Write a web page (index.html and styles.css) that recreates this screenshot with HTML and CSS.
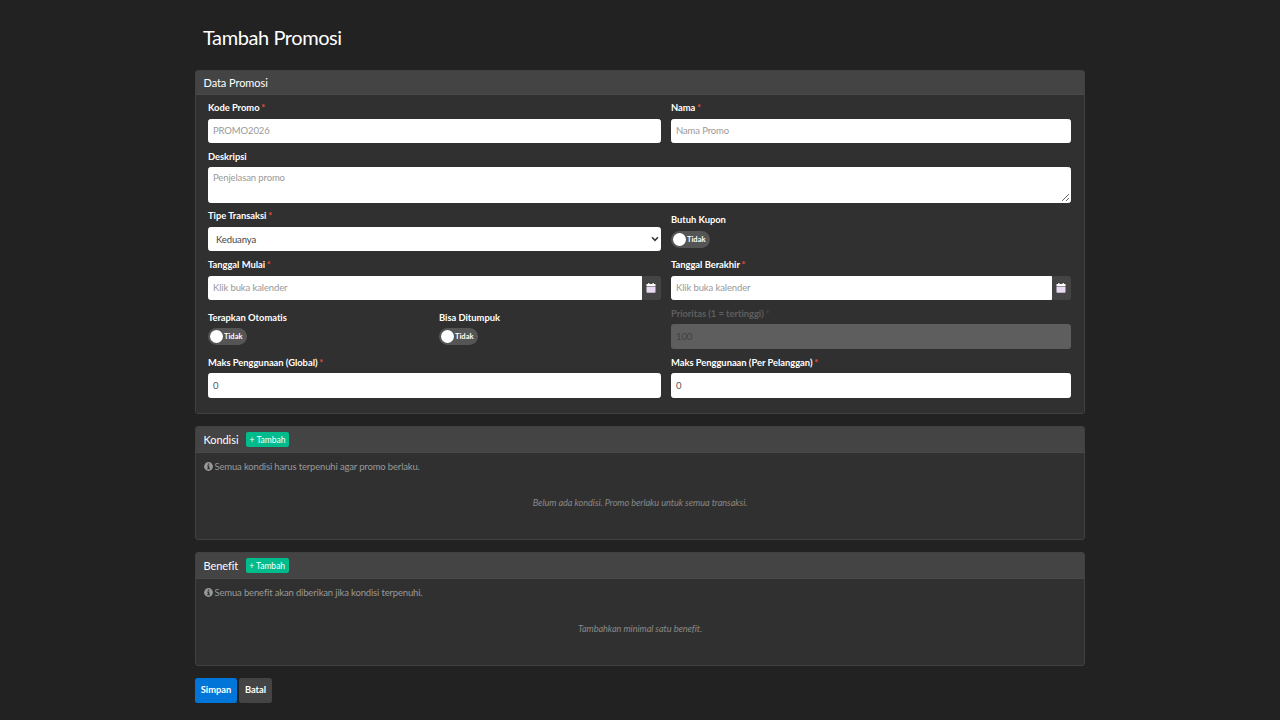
FILE: index.html
```html
<!DOCTYPE html>
<html lang="id">
<head>
<meta charset="utf-8">
<title>Tambah Promosi</title>
<link rel="stylesheet" href="styles.css">
</head>
<body>
<main class="page">
  <h1 class="page-title">Tambah Promosi</h1>

  <section class="card">
    <header class="card-header card-header-slim">Data Promosi</header>
    <div class="form-grid">
      <div class="field left">
        <label class="label">Kode Promo <span class="req">*</span></label>
        <input class="control" placeholder="PROMO2026">
      </div>
      <div class="field">
        <label class="label">Nama <span class="req">*</span></label>
        <input class="control" placeholder="Nama Promo">
      </div>
      <div class="field full">
        <label class="label">Deskripsi</label>
        <textarea class="control area" placeholder="Penjelasan promo"></textarea>
      </div>
      <div class="field left">
        <label class="label">Tipe Transaksi <span class="req">*</span></label>
        <div class="control select"><span>Keduanya</span>
          <svg class="chevron" viewBox="0 0 8 6"><path d="M1 1.2 4 4.3 7 1.2" fill="none" stroke="#333" stroke-width="1.5"/></svg>
        </div>
      </div>
      <div class="field toggle-field">
        <label class="label">Butuh Kupon</label>
        <div class="toggle"><i class="knob"></i>Tidak</div>
      </div>
      <div class="field left">
        <label class="label">Tanggal Mulai <span class="req">*</span></label>
        <div class="group">
          <input class="control" placeholder="Klik buka kalender">
          <span class="addon"><svg class="calendar" viewBox="0 0 10 10"><path fill="#fff" d="M.5 1h1.7V0h1.2v1h3.2V0h1.2v1h1.7v2h-9z"/><path fill="#ead9f2" d="M.5 3.6h9V9q0 .8-.8.8H1.3q-.8 0-.8-.8z"/></svg></span>
        </div>
      </div>
      <div class="field">
        <label class="label">Tanggal Berakhir <span class="req">*</span></label>
        <div class="group">
          <input class="control" placeholder="Klik buka kalender">
          <span class="addon"><svg class="calendar" viewBox="0 0 10 10"><path fill="#fff" d="M.5 1h1.7V0h1.2v1h3.2V0h1.2v1h1.7v2h-9z"/><path fill="#ead9f2" d="M.5 3.6h9V9q0 .8-.8.8H1.3q-.8 0-.8-.8z"/></svg></span>
        </div>
      </div>
      <div class="field toggle-field">
        <label class="label">Terapkan Otomatis</label>
        <div class="toggle"><i class="knob"></i>Tidak</div>
      </div>
      <div class="field toggle-field">
        <label class="label">Bisa Ditumpuk</label>
        <div class="toggle"><i class="knob"></i>Tidak</div>
      </div>
      <div class="field disabled">
        <label class="label">Prioritas (1 = tertinggi) <span class="req">*</span></label>
        <input class="control" value="100" disabled>
      </div>
      <div class="field left">
        <label class="label">Maks Penggunaan (Global) <span class="req">*</span></label>
        <input class="control" value="0">
      </div>
      <div class="field">
        <label class="label">Maks Penggunaan (Per Pelanggan) <span class="req">*</span></label>
        <input class="control" value="0">
      </div>
    </div>
  </section>

  <section class="card list-card">
    <header class="card-header">Kondisi <button class="btn-add">+ Tambah</button></header>
    <p class="hint"><svg class="info" viewBox="0 0 10 10"><circle cx="5" cy="5" r="4.9" fill="#999"/><path fill="#303030" d="M4.2 1.6h1.7v1.5H4.2zM3.5 3.9h2.4v3h.7v1.2H3.5V6.9h.7V5.1h-.7z"/></svg><span class="hint-text">Semua kondisi harus terpenuhi agar promo berlaku.</span></p>
    <p class="empty">Belum ada kondisi. Promo berlaku untuk semua transaksi.</p>
  </section>

  <section class="card list-card">
    <header class="card-header">Benefit <button class="btn-add">+ Tambah</button></header>
    <p class="hint"><svg class="info" viewBox="0 0 10 10"><circle cx="5" cy="5" r="4.9" fill="#999"/><path fill="#303030" d="M4.2 1.6h1.7v1.5H4.2zM3.5 3.9h2.4v3h.7v1.2H3.5V6.9h.7V5.1h-.7z"/></svg><span class="hint-text">Semua benefit akan diberikan jika kondisi terpenuhi.</span></p>
    <p class="empty">Tambahkan minimal satu benefit.</p>
  </section>

  <div class="actions">
    <button class="btn btn-primary">Simpan</button>
    <button class="btn btn-secondary">Batal</button>
  </div>
</main>
</body>
</html>
```

FILE: styles.css
```css
* { box-sizing: border-box; }
body {
  margin: 0;
  height: 720px;
  overflow: hidden;
  background: #222;
  color: #fff;
  font-family: Lato, sans-serif;
  font-size: 9.5px;
}
.page { width: 890px; margin-left: 195px; padding-top: 23px; }
.page-title { margin: 0 0 19px 8px; font-size: 20px; letter-spacing: -.42px; line-height: 28px; font-weight: 400; }
.card {
  height: 344px;
  margin-bottom: 12px;
  background: #303030;
  border: 1px solid #414141;
  border-radius: 3px;
  overflow: hidden;
}
.card-header {
  display: flex;
  align-items: center;
  gap: 7.5px;
  height: 26px;
  padding: 0 7.5px;
  background: #444;
  border-bottom: 1px solid #494949;
  font-size: 11px;
  letter-spacing: -.07px;
}
.card-header-slim { height: 24px; }
.form-grid {
  display: grid;
  grid-template-columns: 221px 222px 400px;
  grid-template-rows: 42.5px 52.5px 41.5px 42px 41.5px 42px;
  gap: 7px 10px;
  padding: 5.6px 12px;
  align-items: end;
}
.left { grid-column: span 2; }
.full { grid-column: span 3; }
.field { display: flex; flex-direction: column; }
.label { font-weight: 700; font-size: 9.4px; letter-spacing: -.03px; line-height: 14px; margin-bottom: 3.4px; white-space: nowrap; }
.req { margin-left: -.5px; color: #e74c3c; }
.control {
  display: block;
  width: 100%;
  height: 24.5px;
  padding: 0 4px;
  border: 1px solid #fff;
  border-radius: 2.5px;
  background: #fff;
  color: #555;
  font: 9.5px Lato, sans-serif;
  letter-spacing: -.12px;
  outline: 0;
}
.control::placeholder { color: #999; opacity: 1; }
.area { height: 36px; padding-top: 4.5px; resize: vertical; }
.full .label { margin-bottom: 2.6px; }
.select { display: flex; align-items: center; justify-content: space-between; padding: 1px 1px 0 7px; color: #444; }
.chevron { width: 8px; height: 6px; }
.toggle-field { padding-bottom: 3.6px; }
.toggle-field .label { margin-bottom: 3.4px; }
.toggle {
  display: flex;
  align-items: center;
  gap: 1px;
  width: 38.5px;
  height: 17px;
  padding: 0 0 0 2px;
  border-radius: 9px;
  background: #555;
  font-size: 7.5px;
  font-weight: 700;
  line-height: 17px;
}
.knob { width: 13px; height: 13px; border-radius: 50%; background: #fff; }
.group { display: flex; }
.group .control { flex: 1; min-width: 0; border-radius: 2.5px 0 0 2.5px; }
.addon {
  display: flex;
  align-items: center;
  justify-content: center;
  width: 19px;
  padding-right: 1px;
  background: #444;
  border-radius: 0 2.5px 2.5px 0;
}
.calendar { width: 10px; height: 10px; }
.disabled .label { color: #5f5f5f; }
.disabled .req { color: #464646; }
.disabled .control { background: #5e5e5e; border-color: #5e5e5e; color: #414141; }
.list-card { height: 114px; }
.btn-add {
  width: 43px;
  height: 15px;
  padding: 0;
  border: 0;
  border-radius: 2px;
  background: #00bc8c;
  color: #fff;
  font: 8.5px Lato, sans-serif;
  text-align: center;
}
.hint { display: flex; align-items: center; gap: 1.5px; height: 14px; margin: 6px 0 0 8px; color: #999; font-size: 9.5px; letter-spacing: -.16px; }
.info { width: 9px; height: 9px; }
.empty { margin: 22px 0 0; line-height: 16px; text-align: center; font-style: italic; color: #888; font-size: 9.2px; letter-spacing: -.07px; }
.actions { display: flex; gap: 2px; }
.btn {
  height: 25px;
  padding: 0 0 2px;
  border: 0;
  border-radius: 2.5px;
  color: #fff;
  font: 700 9.3px Lato, sans-serif;
}
.btn-primary { width: 42px; background: #0275d8; }
.btn-secondary { width: 33px; background: #444; }
```
